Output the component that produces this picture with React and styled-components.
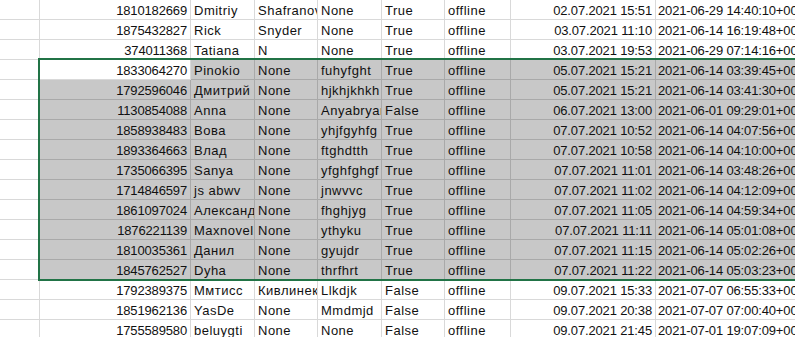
import React from 'react'
import styled, { createGlobalStyle } from 'styled-components'

const GlobalStyle = createGlobalStyle`
  html, body {
    margin: 0;
    padding: 0;
    background: #ffffff;
    overflow: hidden;
  }
`

const COLUMNS = '40px 151px 64px 63px 64px 63px 66px 145px 1fr'

const rows = [
  ['1810182669', 'Dmitriy', 'Shafranov', 'None', 'True', 'offline', '02.07.2021 15:51', '2021-06-29 14:40:10+00:00'],
  ['1875432827', 'Rick', 'Snyder', 'None', 'True', 'offline', '03.07.2021 11:10', '2021-06-14 16:19:48+00:00'],
  ['374011368', 'Tatiana', 'N', 'None', 'True', 'offline', '03.07.2021 19:53', '2021-06-29 07:14:16+00:00'],
  ['1833064270', 'Pinokio', 'None', 'fuhyfght', 'True', 'offline', '05.07.2021 15:21', '2021-06-14 03:39:45+00:00'],
  ['1792596046', 'Дмитрий', 'None', 'hjkhjkhkh', 'True', 'offline', '05.07.2021 15:21', '2021-06-14 03:41:30+00:00'],
  ['1130854088', 'Anna', 'None', 'Anyabryanova', 'False', 'offline', '06.07.2021 13:00', '2021-06-01 09:29:01+00:00'],
  ['1858938483', 'Вова', 'None', 'yhjfgyhfg', 'True', 'offline', '07.07.2021 10:52', '2021-06-14 04:07:56+00:00'],
  ['1893364663', 'Влад', 'None', 'ftghdtth', 'True', 'offline', '07.07.2021 10:58', '2021-06-14 04:10:00+00:00'],
  ['1735066395', 'Sanya', 'None', 'yfghfghgf', 'True', 'offline', '07.07.2021 11:01', '2021-06-14 03:48:26+00:00'],
  ['1714846597', 'js abwv', 'None', 'jnwvvc', 'True', 'offline', '07.07.2021 11:02', '2021-06-14 04:12:09+00:00'],
  ['1861097024', 'Александр', 'None', 'fhghjyg', 'True', 'offline', '07.07.2021 11:05', '2021-06-14 04:59:34+00:00'],
  ['1876221139', 'Maxnovelko', 'None', 'ythyku', 'True', 'offline', '07.07.2021 11:11', '2021-06-14 05:01:08+00:00'],
  ['1810035361', 'Данил', 'None', 'gyujdr', 'True', 'offline', '07.07.2021 11:15', '2021-06-14 05:02:26+00:00'],
  ['1845762527', 'Dyha', 'None', 'thrfhrt', 'True', 'offline', '07.07.2021 11:22', '2021-06-14 05:03:23+00:00'],
  ['1792389375', 'Ммтисс', 'Кивлинекова', 'Llkdjk', 'False', 'offline', '09.07.2021 15:33', '2021-07-07 06:55:33+00:00'],
  ['1851962136', 'YasDe', 'None', 'Mmdmjd', 'False', 'offline', '09.07.2021 20:38', '2021-07-07 07:00:40+00:00'],
  ['1755589580', 'beluygti', 'None', 'None', 'False', 'offline', '09.07.2021 21:45', '2021-07-01 19:07:09+00:00'],
]

// selected block: rows 3..13, active cell is first of row 3
const SEL_FROM = 3
const SEL_TO = 13

export default function App() {
  return (
    <>
      <GlobalStyle />
      <Sheet>
        {rows.map((r, i) => {
          const sel = i >= SEL_FROM && i <= SEL_TO
          const [id, first, last, user, bot, status, seen, created] = r
          return (
            <Row key={i}>
              <Cell />
              <Cell $num $sel={sel && i !== SEL_FROM}>{id}</Cell>
              <Cell $sel={sel}>{first}</Cell>
              <Cell $sel={sel}>{last}</Cell>
              <Cell $sel={sel}>{user}</Cell>
              <Cell $sel={sel}>{bot}</Cell>
              <Cell $sel={sel}>{status}</Cell>
              <Cell $num $sel={sel}>{seen}</Cell>
              <Cell $num $last $sel={sel}>{created}</Cell>
            </Row>
          )
        })}
        <Selection />
      </Sheet>
    </>
  )
}

const Sheet = styled.div`
  position: relative;
  display: flex;
  flex-direction: column;
  width: 795px;
  height: 337px;
  overflow: hidden;
  font-family: "Liberation Sans", Arial, sans-serif;
  font-size: 13px;
  color: #111111;
`

const Row = styled.div`
  display: grid;
  grid-template-columns: ${COLUMNS};
  height: 20px;
  flex: none;
`

const Cell = styled.div`
  display: flex;
  align-items: flex-end;
  justify-content: ${p => (p.$num && !p.$last ? 'flex-end' : 'flex-start')};
  box-sizing: border-box;
  height: 20px;
  padding: 0 ${p => (p.$num && !p.$last ? '3px' : '0')} 2px ${p => (p.$last ? '2px' : '3px')};
  line-height: 13px;
  white-space: nowrap;
  overflow: ${p => (p.$last ? 'visible' : 'hidden')};
  letter-spacing: ${p => (p.$num ? '-0.15px' : '0.5px')};
  background: ${p => (p.$sel ? '#c8c8c8' : '#ffffff')};
  border-right: 1px solid ${p => (p.$sel ? '#a9a9a9' : '#d9d9d9')};
  border-bottom: 1px solid ${p => (p.$sel ? '#a9a9a9' : '#d9d9d9')};
`

const Selection = styled.div`
  position: absolute;
  top: 58px;
  left: 38px;
  width: 800px;
  height: 223px;
  box-sizing: border-box;
  border: 2px solid #217346;
  pointer-events: none;
`
